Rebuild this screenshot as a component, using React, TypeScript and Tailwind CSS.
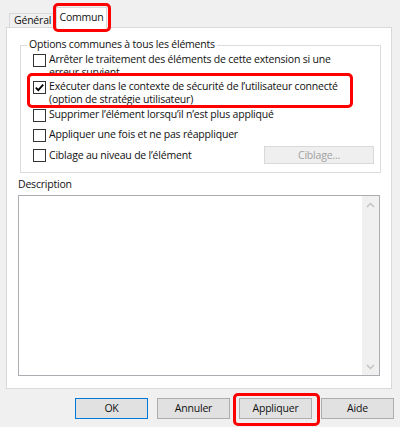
import React from 'react';

const options = [
  { label: 'Arrêter le traitement des éléments de cette extension si une\nerreur survient', checked: false, mark: false, gap: 'mt-0' },
  { label: 'Exécuter dans le contexte de sécurité de l’utilisateur connecté\n(option de stratégie utilisateur)', checked: true, mark: true, gap: 'mt-[1px]' },
  { label: 'Supprimer l’élément lorsqu’il n’est plus appliqué', checked: false, mark: false, gap: 'mt-[2px]' },
  { label: 'Appliquer une fois et ne pas réappliquer', checked: false, mark: false, gap: 'mt-[6px]' }
];

function Checkbox({ checked }: { checked: boolean }) {
  return (
    <div className="mt-[1px] flex h-[13px] w-[13px] shrink-0 items-center justify-center border border-[#333333] bg-white">
      {checked && (
        <svg width="11" height="11" viewBox="0 0 11 11">
          <path d="M1.8 5.6 L4.3 8.1 L9.2 2.6" fill="none" stroke="#000" strokeWidth="1.8" />
        </svg>
      )}
    </div>
  );
}

function RedBox({ className }: { className: string }) {
  return <div className={`pointer-events-none absolute rounded-[5px] border-[3px] border-[#ff0000] ${className}`} />;
}

export default function App() {
  return (
    <div className="relative h-[427px] w-[400px] overflow-hidden bg-[#f0f0f0] font-['Open_Sans','Noto_Sans',sans-serif] text-[10.5px] leading-[13px] tracking-[-0.2px] text-[#111]">
      {/* tabs */}
      <div className="flex h-[27px] items-end pl-[9px]">
        <div className="flex h-[14px] w-[48px] items-center border border-b-0 border-[#d9d9d9] bg-[#f0f0f0] pl-[4px]">
          Général
        </div>
        <div className="relative z-10 -mb-px -ml-px flex h-[21px] w-[51px] items-start justify-center border border-b-0 border-[#d9d9d9] bg-white pt-[3px]">
          Commun
          <RedBox className="-left-[4px] -top-[5px] h-[29px] w-[58px]" />
        </div>
      </div>

      {/* panel */}
      <div className="ml-[6px] h-[362px] w-[386px] border border-[#d9d9d9] bg-white">
        <div className="relative ml-[13px] mt-[17px] h-[128px] w-[361px] border border-[#dcdcdc] pl-[12px] pt-[7px]">
          <div className="absolute -top-[8px] left-[6px] bg-white px-[2px]">Options communes à tous les éléments</div>

          {options.map(o => (
            <div key={o.label} className={`relative flex items-start gap-[3px] ${o.gap}`}>
              <Checkbox checked={o.checked} />
              <div className="whitespace-pre">{o.label}</div>
              {o.mark && <RedBox className="-left-[6px] -top-[7px] h-[35px] w-[326px]" />}
            </div>
          ))}

          <div className="mt-[4px] flex h-[18px] items-center gap-[3px] pr-[6px]">
            <Checkbox checked={false} />
            <div className="whitespace-pre">Ciblage au niveau de l’élément</div>
            <div className="ml-auto flex h-[18px] w-[110px] items-center justify-center border border-[#d9d9d9] bg-[#efefef] text-[#a0a0a0]">
              Ciblage...
            </div>
          </div>
        </div>

        <div className="ml-[11px] mt-[5px]">Description</div>
        <div className="ml-[11px] mt-[4px] flex h-[181px] w-[362px] border border-[#abadb3] bg-white">
          <div className="flex-1" />
          <div className="flex w-[17px] flex-col justify-between bg-[#f0f0f0]">
            <div className="flex h-[17px] items-center justify-center">
              <svg width="9" height="6" viewBox="0 0 9 6">
                <path d="M1 5 L4.5 1.5 L8 5" fill="none" stroke="#c2c2c2" strokeWidth="1.4" />
              </svg>
            </div>
            <div className="flex h-[17px] items-center justify-center">
              <svg width="9" height="6" viewBox="0 0 9 6">
                <path d="M1 1 L4.5 4.5 L8 1" fill="none" stroke="#c2c2c2" strokeWidth="1.4" />
              </svg>
            </div>
          </div>
        </div>
      </div>

      {/* buttons */}
      <div className="ml-[75px] mt-[9px] flex gap-[9px]">
        <button className="flex h-[21px] w-[73px] items-center justify-center border border-[#0078d7] bg-[#e1e1e1]">OK</button>
        <button className="flex h-[21px] w-[73px] items-center justify-center border border-[#adadad] bg-[#e1e1e1]">Annuler</button>
        <button className="relative flex h-[21px] w-[73px] items-center justify-center border border-[#adadad] bg-[#e1e1e1]">
          Appliquer
          <RedBox className="-left-[7px] -top-[6px] h-[33px] w-[87px]" />
        </button>
        <button className="flex h-[21px] w-[73px] items-center justify-center border border-[#adadad] bg-[#e1e1e1]">Aide</button>
      </div>
    </div>
  );
}
